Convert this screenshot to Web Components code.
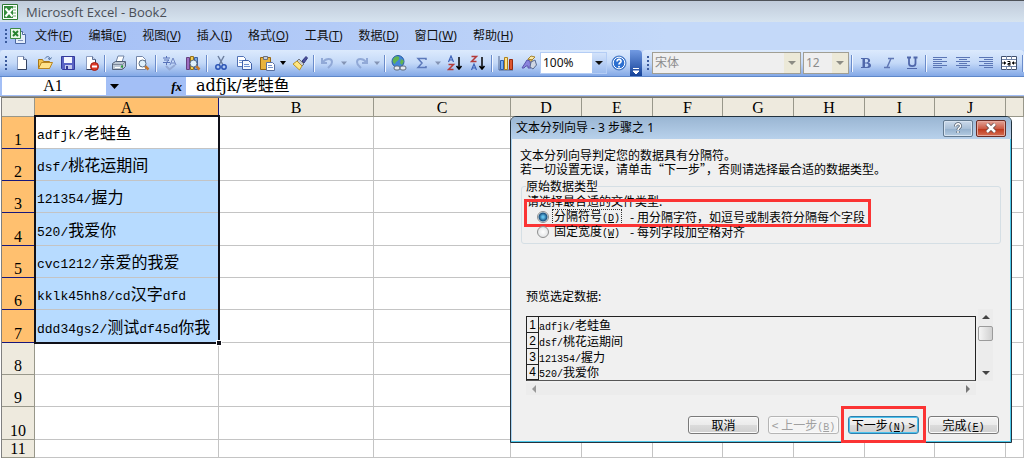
<!DOCTYPE html>
<html lang="zh-CN">
<head>
<meta charset="utf-8">
<title>Microsoft Excel - Book2</title>
<style>
html, body { margin: 0; height: 100%; }
body {
    --song: "Noto Sans CJK SC", sans-serif;
    --ui: "Noto Sans", "Noto Sans CJK SC", sans-serif;
    --mono: "Liberation Mono", "Noto Sans CJK SC", monospace;
    position: relative;
    overflow: hidden;
    background: #fff;
    color: #000;
    font: 12px/16px var(--ui);
}
.tools { display: flex; background: #bdd3f8; }
.tools xl-toolbar:last-child { flex: 1; }
</style>
</head>
<body>
<xl-titlebar>Microsoft Excel - Book2</xl-titlebar>
<xl-menubar items="文件|F,编辑|E,视图|V,插入|I,格式|O,工具|T,数据|D,窗口|W,帮助|H"></xl-menubar>
<div class="tools">
    <xl-toolbar cap>
        <xl-tool icon="new" label="新建"></xl-tool>
        <xl-tool icon="open" label="打开"></xl-tool>
        <xl-tool icon="save" label="保存"></xl-tool>
        <xl-tool icon="permission" label="权限"></xl-tool>
        <xl-sep></xl-sep>
        <xl-tool icon="print" label="打印"></xl-tool>
        <xl-tool icon="preview" label="打印预览"></xl-tool>
        <xl-sep></xl-sep>
        <xl-tool icon="spell" label="拼写检查"></xl-tool>
        <xl-tool icon="research" label="信息检索"></xl-tool>
        <xl-sep></xl-sep>
        <xl-tool icon="cut" label="剪切"></xl-tool>
        <xl-tool icon="copy" label="复制"></xl-tool>
        <xl-tool icon="paste" label="粘贴"></xl-tool>
        <xl-tool icon="arrow" label="粘贴选项" narrow></xl-tool>
        <xl-tool icon="brush" label="格式刷"></xl-tool>
        <xl-sep></xl-sep>
        <xl-tool icon="undo" label="撤消"></xl-tool>
        <xl-tool icon="arrowoff" label="撤消列表" narrow></xl-tool>
        <xl-tool icon="redo" label="恢复"></xl-tool>
        <xl-tool icon="arrowoff" label="恢复列表" narrow></xl-tool>
        <xl-sep></xl-sep>
        <xl-tool icon="link" label="超链接"></xl-tool>
        <xl-tool icon="sum" label="自动求和"></xl-tool>
        <xl-tool icon="arrowoff" label="函数列表" narrow></xl-tool>
        <xl-tool icon="sortaz" label="升序排序"></xl-tool>
        <xl-tool icon="sortza" label="降序排序"></xl-tool>
        <xl-sep></xl-sep>
        <xl-tool icon="chart" label="图表向导"></xl-tool>
        <xl-tool icon="draw" label="绘图"></xl-tool>
        <xl-combo value="100%" label="显示比例" style="width:67px"></xl-combo>
        <xl-tool icon="help" label="帮助"></xl-tool>
    </xl-toolbar>
    <xl-toolbar>
        <xl-combo value="宋体" label="字体" off style="width:149px"></xl-combo>
        <xl-combo value="12" label="字号" off style="width:46px;margin-left:2px"></xl-combo>
        <xl-sep></xl-sep>
        <xl-tool icon="bold" label="加粗"></xl-tool>
        <xl-tool icon="italic" label="倾斜"></xl-tool>
        <xl-tool icon="underline" label="下划线"></xl-tool>
        <xl-sep></xl-sep>
        <xl-tool icon="left" label="左对齐"></xl-tool>
        <xl-tool icon="center" label="居中"></xl-tool>
        <xl-tool icon="right" label="右对齐"></xl-tool>
        <xl-tool icon="merge" label="合并及居中"></xl-tool>
        <xl-sep></xl-sep>
    </xl-toolbar>
</div>
<xl-formulabar cell="A1" value="adfjk/老蛙鱼"></xl-formulabar>
<xl-sheet></xl-sheet>
<text-wizard></text-wizard>

<script>
"use strict"
{
    const DATA = ['adfjk/老蛙鱼', 'dsf/桃花运期间', '121354/握力', '520/我爱你', 'cvc1212/亲爱的我爱', 'kklk45hh8/cd汉字dfd', 'ddd34gs2/测试df45d你我'];

    // half-width runs use the monospace face, set smaller so two of them fill one ideograph
    function mixed(text) {
        return text.replace(/[\x21-\x7e]+/g, '<span class="en">$&</span>');
    }
    function key(letter) {
        return `<span class="en">(<u>${letter}</u>)</span>`;
    }

    const page = '<path d="M3.5 1.5h6l3 3v10h-9z" fill="#fff" stroke="#8b9cc0"/><path d="M12.500 4.500v10h-9" fill="none" stroke="#33415f"/><path d="M9.500 1.500v3h3" fill="#c7d5ee" stroke="#5d6f95"/>';
    const lens = '<path d="M11 11l3.500 3.500" stroke="#c5762a" stroke-width="2.500"/><circle cx="8.500" cy="8.500" r="3.500" fill="#dff0fb" stroke="#5a6d86"/>';
    const ICONS = {
        logo: '<path d="M.5.5h15v15H.5z" fill="#fff" stroke="#2f7a35"/><path d="M2 2h9v12H2z" fill="#338a3b"/><path d="M11 3h3M11 6h3M11 9h3M11 12h3" stroke="#68ac6b"/><path d="M3.500 4.500l7 8M10.500 4.500l-7 8" stroke="#fff" stroke-width="2"/>',
        book: '<path d="M5.500 3.500h7l3 3v9h-10z" fill="#e4edfb" stroke="#4c68a2"/><path d="M12.500 3.500v3h3" fill="#fff" stroke="#4c68a2"/><path d="M.5.5h10v10H.5z" fill="#e9f6e8" stroke="#3e8b44"/><path d="M3 3l5 5M8 3L3 8" stroke="#27812f" stroke-width="2"/><path d="M8 12.500h5" stroke="#8194bd"/>',
        new: page,
        open: '<path d="M1.500 13.500v-9h4l1 2h6v7z" fill="#f2c34f" stroke="#a97818"/><path d="M1.500 13.500l3-6h11l-3 6z" fill="#ffe28a" stroke="#b98521"/><path d="M8 3.500c2-3 5-2 5 .5m1.500-1.500L13 4.500l-2-1" fill="none" stroke="#4d6c9d"/>',
        save: '<path d="M1.500 1.500h13v13h-12l-1-1z" fill="#5a63c4" stroke="#34399a"/><path d="M4 2h8v6H4z" fill="#f4f6ff"/><path d="M5 10h7v4H5z" fill="#c6cbee"/><path d="M6 11h2v3H6z" fill="#343a92"/>',
        permission: page + '<circle cx="11.500" cy="11.500" r="4" fill="#dd3b29" stroke="#a32014"/><path d="M9 11.500h5" stroke="#fff" stroke-width="2"/>',
        print: '<path d="M5 7l2-6h6l-2 6z" fill="#fff" stroke="#7184a5"/><path d="M1.500 8.500l3-2h10v5l-3 3h-10z" fill="#bcc7d4" stroke="#53617a"/><path d="M2 9.500h9.500l3-3M11.500 9.500v5" fill="none" stroke="#7c889b"/><path d="M4 12.500h5" stroke="#fff"/><path d="M10 11.500h2" stroke="#29a13a" stroke-width="2"/>',
        preview: '<path d="M2.500 1.500h6l3 3v10h-9z" fill="#fff" stroke="#7486a9"/>' + lens,
        spell: '<path d="M1 3h7M4.500 1v2M2 5h5L4.500 7v3M1 7.500h7" stroke="#5671b8" fill="none"/><path d="M8 10l3-7 3 7M9 8h4" stroke="#7187c4" fill="none"/><path d="M4 11l3.500 3.500L13 10" stroke="#94a9d4" stroke-width="2" fill="none"/>',
        research: '<path d="M1.500 2.500h3v12h-3z" fill="#9d6dc1" stroke="#65407f"/><path d="M5.500 1.500h3v13h-3z" fill="#f2cf58" stroke="#95711a"/><path d="M9.500 2.500h3v12h-3z" fill="#76a3dd" stroke="#3f62a0"/>' + lens,
        cut: '<path d="M5 1l5 9M11 1L6 10" stroke="#6d7f9f" stroke-width="1.500"/><circle cx="5" cy="12" r="2.200" fill="none" stroke="#2a53b5" stroke-width="1.500"/><circle cx="11" cy="12" r="2.200" fill="none" stroke="#2a53b5" stroke-width="1.500"/>',
        copy: '<path d="M1.500 1.500h6l2 2v8h-8z" fill="#fff" stroke="#5272b5"/><path d="M3 5.500h4M3 7.500h3" stroke="#7a9ad6"/><path d="M6.500 5.500h6l3 3v6h-9z" fill="#f2f7ff" stroke="#3e5fa8"/><path d="M8 9.500h5M8 11.500h6" stroke="#6c8fd1"/>',
        paste: '<path d="M1.500 2.500h10v12h-10z" fill="#e9b33d" stroke="#956515"/><path d="M4.500 1.500h4v3h-4z" fill="#c8ced8" stroke="#6b7280"/><path d="M7.500 7.500h6l2 2v6h-8z" fill="#fff" stroke="#5a70a0"/><path d="M9 10.500h4M9 12.500h5" stroke="#7894ca"/>',
        arrow: '<path d="M5 6h6l-3 4z" fill="#000"/>',
        arrowoff: '<path d="M5 6.500h6l-3 3.500z" fill="#8494b4"/>',
        brush: '<path d="M10 6l4-4.500 1.500 1.500L12 8z" fill="#4a4f9c" stroke="#34397d"/><path d="M7 4l5 5-2 2-5-5z" fill="#c7cad2" stroke="#70757f"/><path d="M5 6l5 5-2.500 4L1 9z" fill="#ffe681" stroke="#b89429"/>',
        undo: '<path d="M2 3v5h5M3 7c3-4 9-4 9 0 0 3-2 4-4 6" fill="none" stroke="#91a9d7" stroke-width="2"/>',
        redo: '<path d="M14 3v5H9M13 7c-3-4-9-4-9 0 0 3 2 4 4 6" fill="none" stroke="#91a9d7" stroke-width="2"/>',
        link: '<circle cx="7" cy="6.500" r="6" fill="#4285d8" stroke="#285b9f"/><path d="M4 2c3-2 5 0 4 2S5 6 4 9C1 8 1 4 4 2zM10 4l3 2-2 4-2-2z" fill="#62b450"/><rect x="3" y="11" width="6" height="4" rx="2" fill="#e4e9f0" stroke="#5f6b7d"/><rect x="9" y="11" width="6" height="4" rx="2" fill="#e4e9f0" stroke="#5f6b7d"/>',
        sum: '<path d="M12 5V3.500H4L8 8l-4 4.500h8V11" fill="none" stroke="#5c79bb" stroke-width="1.500"/>',
        sortaz: '<path d="M1.500 7L4 1l2.500 6M2.500 5h3" fill="none" stroke="#3d62b8" stroke-width="1.200"/><path d="M1.500 9.500h5l-5 5h5" fill="none" stroke="#b33a3a" stroke-width="1.500"/><path d="M12 2v11M9.500 11l2.500 3 2.500-3" fill="none" stroke="#000" stroke-width="1.500"/>',
        sortza: '<path d="M1.500 1.500h5l-5 5h5" fill="none" stroke="#b33a3a" stroke-width="1.500"/><path d="M1.500 15L4 9l2.500 6M2.500 13h3" fill="none" stroke="#3d62b8" stroke-width="1.200"/><path d="M12 2v11M9.500 11l2.500 3 2.500-3" fill="none" stroke="#000" stroke-width="1.500"/>',
        chart: '<path d="M1 1v14h14" fill="none" stroke="#51658c"/><path d="M2.500 5.500h3v9h-3z" fill="#76aaf0" stroke="#2e5eac"/><path d="M6.500 2.500h3v12h-3z" fill="#ffe38a" stroke="#af811d"/><path d="M11.500 4.500h3v10h-3z" fill="#de5630" stroke="#97290f"/>',
        draw: '<path d="M7 4l3-3 4 1-3 3z" fill="#fbe9a8" stroke="#a38330"/><path d="M7 4l4 1v5H7z" fill="#e6c45c" stroke="#a38330"/><path d="M1 13l5-8 3 1 1 7H7v-2H5l-2 2z" fill="#8a83dc" stroke="#5a57ae"/><path d="M10 7l4-2 1.500 5-3.500 4-3-2z" fill="#cfd6e2" stroke="#596b90"/>',
        help: '<circle cx="8" cy="8" r="7" fill="#2c6fd0" stroke="#4b7bc4"/><circle cx="8" cy="8" r="5.800" fill="none" stroke="#fff"/><path d="M6 6.500c0-3 4.500-2.500 4 0C9.500 8 8 8 8 9.500M8 11v1.500" fill="none" stroke="#fff" stroke-width="1.700"/>',
        bold: '<path d="M3 3h6c4 0 4 4.500 1 4.700 4 .3 4 5.300 0 5.300H3v-1h1.500V4H3zM7 4v3.500h1.500c2 0 2-3.500 0-3.500zM7 8.500V12h1.500c2.500 0 2.500-3.500 0-3.500z" fill="#5068ab" fill-rule="evenodd"/>',
        italic: '<path d="M7 3.500h6M3 12.500h6M10 3.500l-4 9" fill="none" stroke="#6077b4" stroke-width="1.500"/>',
        underline: '<path d="M3 2.500h4M9.500 2.500h4M5 2.500v6c0 3.500 6.500 3.500 6.500 0v-6" fill="none" stroke="#5068ab" stroke-width="1.800"/><path d="M3 13.500h10" stroke="#5068ab"/>',
        left: '<path d="M1 2.500h14M1 4.500h9M1 6.500h14M1 8.500h9M1 10.500h14M1 12.500h9" stroke="#5b76b6"/>',
        center: '<path d="M1 2.500h14M4 4.500h8M1 6.500h14M4 8.500h8M1 10.500h14M4 12.500h8" stroke="#5b76b6"/>',
        right: '<path d="M1 2.500h14M6 4.500h9M1 6.500h14M6 8.500h9M1 10.500h14M6 12.500h9" stroke="#5b76b6"/>',
        merge: '<path d="M.5 1.500h15v13H.5z" fill="#fff" stroke="#40506e"/><path d="M1 4.500h14M1 11.500h14M5.500 1v3M10.500 1v3M5.500 12v3M10.500 12v3" stroke="#7083a6"/><path d="M1 8h4M15 8h-4" stroke="#111"/><path d="M3 6l2 2-2 2zM13 6l-2 2 2 2z"/><path d="M6.500 6.500H9v4M9 8.500H7v1.500h2" fill="none" stroke="#000"/>'
    };
    function icon(name) {
        return `<svg width="16" height="16" viewBox="0 0 16 16" aria-hidden="true">${ICONS[name]}</svg>`;
    }

    class Base extends HTMLElement {
        connectedCallback() {
            if (this.shadowRoot) return;
            const shadow = this.attachShadow({ mode: 'open' });
            const template = document.createElement('template');
            template.innerHTML = `<style>
*, ::before, ::after { box-sizing: border-box; }
button, input, select { margin: 0; padding: 0; border: 0; background: none; font: inherit; color: inherit; outline: 0; }
svg { display: block; flex: none; }
${this.css()}</style>${this.html()}`;
            shadow.appendChild(template.content);
        }
        css() { return ''; }
        html() { return '<slot></slot>'; }
    }

    class Titlebar extends Base {
        css() {
            return `:host { display: flex; align-items: center; gap: 8px; height: 22px; box-sizing: border-box; padding: 0 2px; border-top: 1px solid #4e5258; background: linear-gradient(#c0cbda, #d6e3ef); color: #4a4f58; font: 13px/16px "Open Sans", sans-serif; }`;
        }
        html() { return icon('logo') + '<slot></slot>'; }
    }

    class Menubar extends Base {
        css() {
            return `:host { display: flex; align-items: center; height: 28px; padding: 0 5px; background: linear-gradient(90deg, #a2bdf5, #c4d9f9 65%); }
.grip { width: 2px; height: 15px; margin-right: 3px; background: repeating-linear-gradient(#3a5a9c 0 2px, transparent 2px 4px); }
nav { display: flex; gap: 16px; margin-left: 9px; }
a { color: #111; text-decoration: none; }`;
        }
        html() {
            const items = this.getAttribute('items').split(',').map(i => i.split('|'));
            return `<i class="grip"></i>${icon('book')}<nav>${items.map(([t, k]) => `<a href="#${k}">${t}(<u>${k}</u>)</a>`).join('')}</nav>`;
        }
    }

    class Toolbar extends Base {
        css() {
            return `:host { display: flex; align-items: center; height: 27px; box-sizing: border-box; overflow: hidden; padding-left: 3px; border-bottom: 1px solid #5f88ca; background: linear-gradient(#dceafd, #c4d9f8 50%, #83a8e6); border-radius: 4px 4px 0 0; }
.grip { flex: none; width: 2px; height: 15px; margin: 0 3px 0 2px; background: repeating-linear-gradient(#3a5a9c 0 2px, transparent 2px 4px); }
.cap { display: flex; align-items: flex-end; justify-content: center; width: 12px; height: 27px; background: linear-gradient(#719ae2, #123f96); }`;
        }
        html() {
            const cap = this.hasAttribute('cap') ? '<button class="cap" aria-label="工具栏选项"><svg width="8" height="10"><path d="M1 1.500h6M1 4h6L4 7z" fill="#fff" stroke="#fff"/></svg></button>' : '';
            return `<i class="grip"></i><slot></slot>${cap}`;
        }
    }

    class Tool extends Base {
        css() {
            return `:host { display: block; flex: none; width: 23px; }
:host([narrow]) { width: 10px; }
button { display: flex; align-items: center; justify-content: center; width: 100%; height: 24px; }`;
        }
        html() { return `<button aria-label="${this.getAttribute('label')}">${icon(this.getAttribute('icon'))}</button>`; }
    }

    class Sep extends Base {
        css() { return `:host { flex: none; width: 1px; height: 17px; margin: 0 2px; background: #6a8ccb; box-shadow: 1px 0 #f1f6ff; }`; }
        html() { return ''; }
    }

    class Combo extends Base {
        css() {
            return `:host { display: grid; flex: none; grid-template-columns: 1fr 14px; height: 22px; box-sizing: border-box; border: 1px solid #b4cdf5; background: #fff; color: #111; }
select { grid-area: 1 / 1 / 2 / 3; appearance: none; padding-left: 2px; }
.drop { grid-area: 1 / 2; display: flex; align-items: center; justify-content: center; background: linear-gradient(#d3e3fb, #9dbcee); pointer-events: none; }
:host([off]) { grid-template-columns: 1fr 16px; border: 1px solid #a19f94; background: #efefef; color: #8c8c8c; }
:host([off]) .drop { background: #ece9d8; color: #8c8c84; }`;
        }
        html() {
            const v = this.getAttribute('value');
            return `<select aria-label="${this.getAttribute('label')}"><option>${v}</option></select><span class="drop"><svg width="8" height="5"><path d="M0 0h8L4 4z" fill="currentColor"/></svg></span>`;
        }
    }

    class Formulabar extends Base {
        css() {
            return `:host { display: flex; height: 19px; padding-left: 2px; border-bottom: 1px solid #8f8f8f; background: #a3bff6; }
input { height: 18px; background: #fff; }
.name { width: 104px; padding-right: 2px; text-align: center; font: 16px/18px "Liberation Serif", serif; }
.gap { display: flex; align-items: center; justify-content: space-between; width: 80px; padding: 0 4px; }
.value { flex: 1; min-width: 0; padding-left: 10px; font: 16px/18px "DejaVu Serif", var(--song); font-variant-ligatures: none; }
.fx { font: italic bold 13px/16px "Liberation Serif", serif; }`;
        }
        html() {
            return `<input class="name" aria-label="名称框" value="${this.getAttribute('cell')}"><span class="gap"><svg width="9" height="5"><path d="M0 0h9L4.500 5z"/></svg><span class="fx">fx</span></span><input class="value" aria-label="编辑栏" value="${this.getAttribute('value')}">`;
        }
    }

    class Sheet extends Base {
        css() {
            return `:host { display: block; margin-left: 1px; border-left: 1px solid #808080; border-top: 1px solid #77776e; }
table { width: 100%; table-layout: fixed; border-collapse: separate; border-spacing: 0; font: 16px/18px var(--song); }
th, td { padding: 0; white-space: nowrap; border: 0 solid #c4c4c4; border-width: 0 1px 1px 0; }
td { height: 32px; text-align: left; vertical-align: middle; }
tr:nth-child(3n+4) td { height: 33px; }
tr:last-child td { height: 18px; }
th { background: #eeeade; border-color: #98978a; font: 16px/17px "Liberation Serif", serif; }
thead th { height: 19px; }
tbody th { vertical-align: bottom; }
th.on { background: #ffc06f; border-color: #17177c; }
td.on { padding-left: 2px; background: #b7dbff; }
td.first { position: relative; background: #fff; }
.en { font: 13px/1 var(--mono); }
.range { position: absolute; z-index: 1; top: -2px; left: -1px; width: 186px; height: 229px; border: 2px solid #101018; }
.range::after { content: ""; position: absolute; right: -4px; bottom: -4px; width: 6px; height: 6px; border: 1px solid #fff; background: #101018; }`;
        }
        html() {
            const widths = [33, 184, 155, 137, 71, 71, 70, 71, 71, 70, 71];
            const cols = widths.map(w => `<col style="width:${w}px">`).join('') + '<col>';
            const head = 'ABCDEFGHIJ'.split('').map((c, i) => `<th scope="col"${i ? '' : ' class="on"'}>${c}</th>`).join('');
            let rows = '';
            for (let r = 0; r < 11; r++) {
                const on = r < DATA.length;
                const text = on ? mixed(DATA[r]) : '';
                const range = r === 0 ? '<span class="range"></span>' : '';
                rows += `<tr><th scope="row"${on ? ' class="on"' : ''}>${r + 1}</th><td class="${on ? 'on' : ''}${r === 0 ? ' first' : ''}">${text}${range}</td>${'<td></td>'.repeat(10)}</tr>`;
            }
            return `<table><colgroup>${cols}</colgroup><thead><tr><th></th>${head}<th></th></tr></thead><tbody>${rows}</tbody></table>`;
        }
    }

    class DialogButton extends Base {
        css() {
            return `:host { position: relative; display: block; width: 71px; }
button { width: 100%; height: 18px; border: 1px solid #7a7a7a; border-radius: 3px; background: linear-gradient(#f4f4f4, #ebebeb 50%, #dcdcdc 50%, #d0d0d0); box-shadow: inset 0 0 0 1px #fafafa; font: 12px/16px var(--song); white-space: nowrap; }
:host([off]) button { border-color: #b5b5b5; background: #f4f4f4; color: #a0a0a0; }
:host([main]) button { border-color: #2f7fae; box-shadow: inset 0 0 0 1px #4cc3ee; }
:host([main])::after { content: ""; position: absolute; inset: -10px -7px -9px; border: 3px solid #fb3434; }`;
        }
        html() { return `<button${this.hasAttribute('off') ? ' disabled' : ''}><slot></slot></button>`; }
    }

    class Wizard extends Base {
        css() {
            return `:host { position: absolute; top: 116px; left: 510px; width: 502px; box-sizing: border-box; border: 1px solid #22323e; border-radius: 6px 6px 0 0; background: #f0f0f0; box-shadow: inset -1px -1px #4cc8ea, inset 1px 0 #a9d3f2; font: 12px/14px var(--song); }
.en { font: 10px/1 var(--mono); }
header { display: flex; align-items: center; gap: 3px; height: 22px; padding: 0 5px; border-radius: 5px 5px 0 0; background: linear-gradient(#9ab6d3, #b8d1eb); }
h1 { flex: 1; margin: 0; font: 12px/16px var(--ui); }
header button { display: flex; align-items: center; justify-content: center; width: 30px; height: 17px; border: 1px solid #62798f; border-radius: 2px; background: linear-gradient(#cbdaea, #a9c0d8 50%, #92afcc 50%, #b5cce2); box-shadow: inset 0 0 0 1px #d7e4f1; }
header .close { border-color: #6b2b24; background: linear-gradient(#e2a397, #cc5b45 50%, #bb3217 50%, #d67055); box-shadow: inset 0 0 0 1px #e5a99d; }
main { padding: 9px 10px 8px 9px; }
p { margin: 0; white-space: nowrap; }
fieldset { min-width: 0; margin: 3px 0 0 1px; padding: 1px 5px 4px; border: 1px solid #d5dfe5; border-radius: 3px; }
legend { padding: 0; margin-left: -1px; }
.row { position: relative; display: flex; align-items: center; height: 15px; padding-left: 10px; white-space: nowrap; }
.row label { display: flex; align-items: center; }
.row i { margin-left: 8px; font-style: normal; }
.row b { margin-left: 3px; padding: 0 1px; border: 1px dotted transparent; font-weight: normal; line-height: 12px; }
.row.marked { margin-top: 1px; }
.marked b { border-color: #333; }
.marked::after { content: ""; position: absolute; inset: -10px auto -3px -3px; width: 347px; border: 3px solid #fb3434; }
.row input { appearance: none; width: 12px; height: 12px; border: 1px solid #8e8f8f; border-radius: 50%; background: radial-gradient(#fff, #d9dcde); }
.row input:checked { background: radial-gradient(#62c1ec 0 1px, #174f7e 4px, #e6edf1 5px); }
h2 { margin: 45px 0 6px 6px; font: inherit; }
.preview { display: grid; grid-template-columns: 1fr 15px; column-gap: 2px; row-gap: 2px; align-items: end; padding: 0 8px 0 6px; }
.grid { height: 65px; overflow: hidden; border: 1px solid #222; border-bottom-color: #555; }
table { border-collapse: separate; border-spacing: 0; }
th, td { height: 16px; padding: 0; white-space: nowrap; line-height: 14px; }
th { width: 12px; border: 0 solid #222; border-width: 0 1px 1px 0; font: 12px/14px "Liberation Sans", sans-serif; }
tr:last-child > * { height: 15px; }
.bar { display: flex; align-items: center; justify-content: space-between; background: #ececec; }
.v { flex-direction: column; height: 72px; padding: 4px 0; }
.v i { width: 15px; height: 15px; margin-bottom: 24px; border: 1px solid #9b9b9b; border-radius: 2px; background: linear-gradient(90deg, #f5f5f5, #d0d0d0); }
.h { height: 12px; padding: 0 4px; }
footer { display: flex; justify-content: flex-end; gap: 9px; margin-top: 21px; padding-right: 2px; }`;
        }
        html() {
            const rows = DATA.slice(0, 4).map((t, i) => `<tr><th scope="row">${i + 1}</th><td>${mixed(t)}</td></tr>`).join('');
            const tri = (d, fill = '#444') => `<svg width="8" height="8"><path d="${d}" fill="${fill}"/></svg>`;
            return `<header><h1>文本分列向导 - 3 步骤之 1</h1>
<button aria-label="帮助"><svg width="12" height="12"><path d="M3.500 4.500c0-4 5.500-3.500 5 0C8 6 6 6 6 8M6 9v2" fill="none" stroke="#53606e" stroke-width="3"/><path d="M3.500 4.500c0-4 5.500-3.500 5 0C8 6 6 6 6 8M6 9v2" fill="none" stroke="#fff" stroke-width="1.500"/></svg></button>
<button class="close" aria-label="关闭"><svg width="12" height="10"><path d="M2 1l8 8M10 1L2 9" stroke="#5d4545" stroke-width="4"/><path d="M2 1l8 8M10 1L2 9" stroke="#fff" stroke-width="2.500"/></svg></button></header>
<main>
<p>文本分列向导判定您的数据具有分隔符。</p>
<p>若一切设置无误，请单击“下一步”，否则请选择最合适的数据类型。</p>
<fieldset><legend>原始数据类型</legend>
<p>请选择最合适的文件类型:</p>
<div class="row marked"><label><input type="radio" name="kind" checked><b>分隔符号${key('D')}</b><i>- 用分隔字符，如逗号或制表符分隔每个字段</i></label></div>
<div class="row"><label><input type="radio" name="kind"><b>固定宽度${key('W')}</b><i>- 每列字段加空格对齐</i></label></div>
</fieldset>
<h2>预览选定数据:</h2>
<div class="preview">
<div class="grid"><table>${rows}</table></div>
<div class="bar v">${tri('M0 6l4-4 4 4z')}<i></i>${tri('M0 2l4 4 4-4z')}</div>
<div class="bar h">${tri('M6 0v8L2 4z', '#999')}${tri('M2 0v8l4-4z', '#777')}</div>
</div>
<footer>
<dialog-button>取消</dialog-button>
<dialog-button off>&lt; 上一步${key('B')}</dialog-button>
<dialog-button main>下一步${key('N')} &gt;</dialog-button>
<dialog-button>完成${key('F')}</dialog-button>
</footer>
</main>`;
        }
    }

    customElements.define('xl-titlebar', Titlebar);
    customElements.define('xl-menubar', Menubar);
    customElements.define('xl-toolbar', Toolbar);
    customElements.define('xl-tool', Tool);
    customElements.define('xl-sep', Sep);
    customElements.define('xl-combo', Combo);
    customElements.define('xl-formulabar', Formulabar);
    customElements.define('xl-sheet', Sheet);
    customElements.define('dialog-button', DialogButton);
    customElements.define('text-wizard', Wizard);
}
</script>
</body>
</html>
